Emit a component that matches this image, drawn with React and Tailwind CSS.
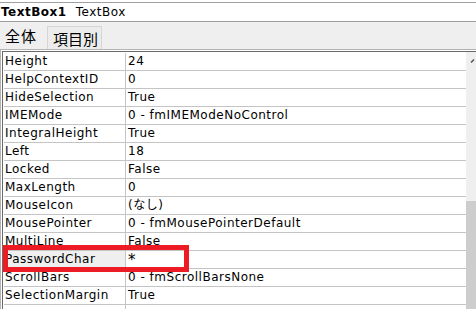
const rows = [
  ["Height", "24"],
  ["HelpContextID", "0"],
  ["HideSelection", "True"],
  ["IMEMode", "0 - fmIMEModeNoControl"],
  ["IntegralHeight", "True"],
  ["Left", "18"],
  ["Locked", "False"],
  ["MaxLength", "0"],
  ["MouseIcon", "(なし)"],
  ["MousePointer", "0 - fmMousePointerDefault"],
  ["MultiLine", "False"],
  ["PasswordChar", "*"],
  ["ScrollBars", "0 - fmScrollBarsNone"],
  ["SelectionMargin", "True"],
  ["", ""],
];

const PropRow = ({ name, value, selected }) => (
  <div className="flex h-[18px] border-b border-[#c4c4c4] leading-[17px] tracking-[0.5px]">
    <div
      className={`w-[122px] shrink-0 border-r border-[#c4c4c4] pl-[1px] whitespace-nowrap ${
        selected ? "bg-[#efefef]" : ""
      }`}
    >
      {name}
    </div>
    <div className={`pl-[2px] whitespace-nowrap ${value === "*" ? "text-[15px] leading-[19px]" : ""}`}>
      {value}
    </div>
  </div>
);

export default function App() {
  return (
    <div className="relative w-[476px] h-[309px] overflow-hidden bg-white text-[12px] text-black font-['DejaVu_Sans','Noto_Sans_CJK_JP',sans-serif]">
      {/* title */}
      <div className="mt-[2px] h-[20px] border-y border-[#a0a0a0] flex items-center pl-[1px] leading-none tracking-[0.5px]">
        <span className="font-bold">TextBox1</span>
        <span className="ml-[9px]">TextBox</span>
      </div>

      {/* tabs */}
      <div className="h-[27px] bg-[#efefef] flex items-end font-['Noto_Sans_CJK_JP',sans-serif] text-[15px] leading-none">
        <div className="w-[47px] h-[27px] flex items-center pl-[5px] tracking-[1px]">全体</div>
        <div className="h-[23px] w-[55px] border-x border-t border-[#d6d6d6] bg-[#ececec] flex items-center pl-[5px]">
          項目別
        </div>
      </div>

      {/* property list */}
      <div className="flex border-t border-l border-[#b4b4b4]">
        <div className="flex-1 mt-[1px] ml-[1px] border-t border-l border-[#6a6a6a]">
          <div className="pt-[1px] pl-[1px] w-[465px]">
            {rows.map(([n, v]) => (
              <PropRow key={n || "blank"} name={n} value={v} selected={n === "PasswordChar"} />
            ))}
          </div>
        </div>
      </div>

      {/* scrollbar */}
      <div className="absolute left-[466px] top-[52px] w-[10px] h-[257px] bg-[#efefef] flex flex-col">
        <svg width="10" height="14" viewBox="0 0 10 14" className="mt-[6px]">
          <path d="M5 4.5 L8 1.5" stroke="#555" strokeWidth="1.6" />
        </svg>
        <div className="mt-[129px] flex-1 bg-[#cdcdcd]" />
      </div>

      {/* red highlight */}
      <div className="absolute left-[3px] top-[245px] w-[186px] h-[27px] border-[5px] border-[#ed1c24]" />
    </div>
  );
}
